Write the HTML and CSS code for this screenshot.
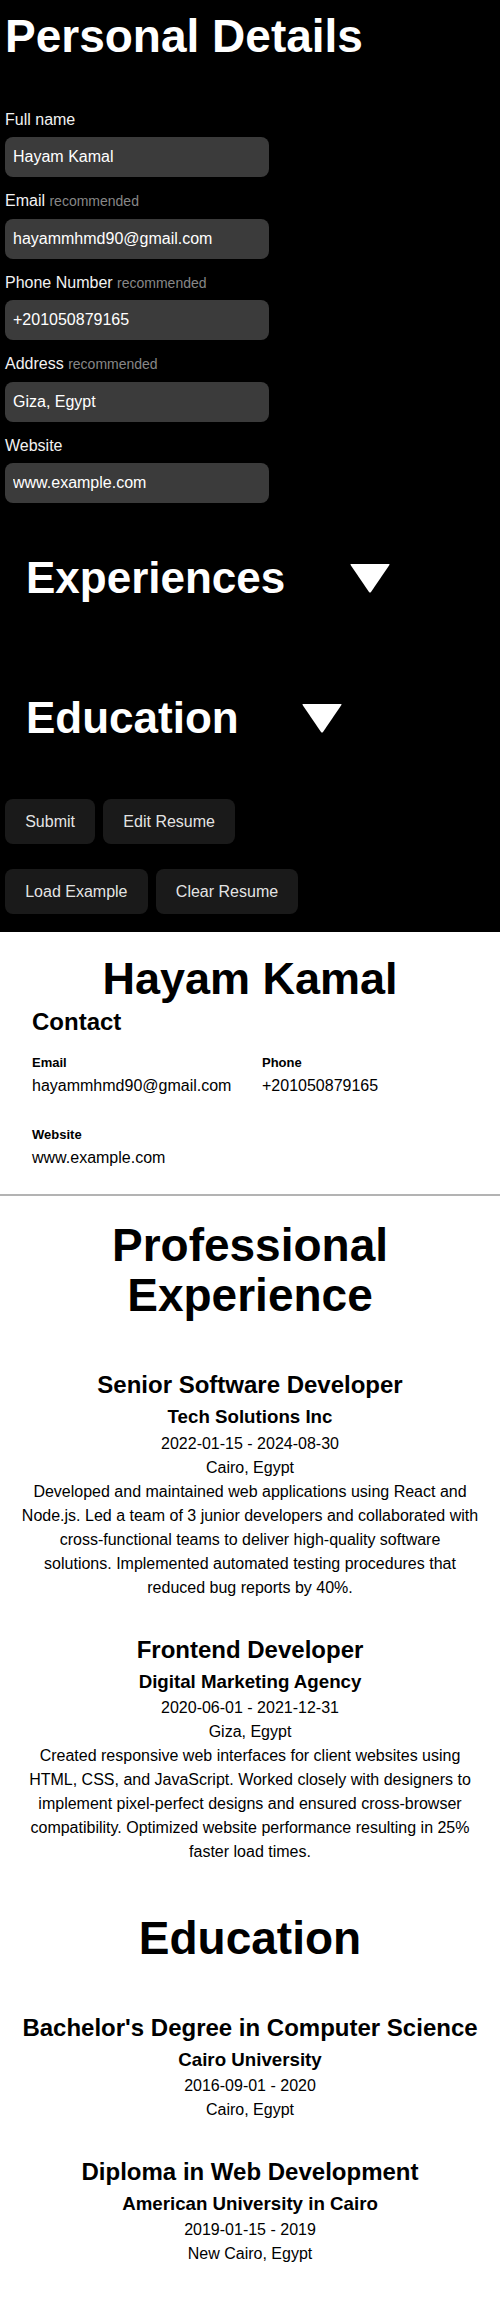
FILE: index.html
```html
<!DOCTYPE html>
<html lang="en">
<head>
<meta charset="utf-8">
<title>Resume Builder</title>
<link rel="stylesheet" href="styles.css">
</head>
<body>
<div class="app">
  <form class="editor">
    <h1 class="editor-title">Personal Details</h1>
    <div class="fields">
      <div class="field">
        <label class="field-label" for="fullname">Full name</label>
        <input class="field-input" id="fullname" type="text" value="Hayam Kamal">
      </div>
      <div class="field">
        <label class="field-label" for="email">Email <span class="rec">recommended</span></label>
        <input class="field-input" id="email" type="text" value="hayammhmd90@gmail.com">
      </div>
      <div class="field">
        <label class="field-label" for="phone">Phone Number <span class="rec">recommended</span></label>
        <input class="field-input" id="phone" type="text" value="+201050879165">
      </div>
      <div class="field">
        <label class="field-label" for="address">Address <span class="rec">recommended</span></label>
        <input class="field-input" id="address" type="text" value="Giza, Egypt">
      </div>
      <div class="field">
        <label class="field-label" for="website">Website</label>
        <input class="field-input" id="website" type="text" value="www.example.com">
      </div>
    </div>

    <div class="toggle toggle-exp">
      <h1 class="toggle-title">Experiences</h1>
      <svg class="caret" width="40" height="29" viewBox="0 0 40 29"><path d="M1 0 H39 Q40 0 39.4 1 L21 28 Q20 29.2 19 28 L0.6 1 Q0 0 1 0 Z" fill="#fff"/></svg>
    </div>
    <div class="toggle toggle-edu">
      <h1 class="toggle-title">Education</h1>
      <svg class="caret" width="40" height="29" viewBox="0 0 40 29"><path d="M1 0 H39 Q40 0 39.4 1 L21 28 Q20 29.2 19 28 L0.6 1 Q0 0 1 0 Z" fill="#fff"/></svg>
    </div>

    <div class="actions">
      <div class="btn-row">
        <button type="button" class="btn">Submit</button>
        <button type="button" class="btn">Edit Resume</button>
      </div>
      <div class="btn-row">
        <button type="button" class="btn">Load Example</button>
        <button type="button" class="btn">Clear Resume</button>
      </div>
    </div>
  </form>

  <main class="resume">
    <header class="resume-head">
      <h1 class="resume-name">Hayam Kamal</h1>
      <div class="contact">
        <h2 class="contact-title">Contact</h2>
        <div class="contact-grid">
          <div class="contact-item">
            <div class="contact-label">Email</div>
            <div class="contact-value">hayammhmd90@gmail.com</div>
          </div>
          <div class="contact-item">
            <div class="contact-label">Phone</div>
            <div class="contact-value">+201050879165</div>
          </div>
          <div class="contact-item">
            <div class="contact-label">Website</div>
            <div class="contact-value">www.example.com</div>
          </div>
        </div>
      </div>
    </header>
    <div class="divider"></div>

    <section class="section section-exp">
      <h1 class="section-title">Professional Experience</h1>
      <div class="entry">
        <h2 class="entry-title">Senior Software Developer</h2>
        <h3 class="entry-org">Tech Solutions Inc</h3>
        <p class="entry-line">2022-01-15 - 2024-08-30</p>
        <p class="entry-line">Cairo, Egypt</p>
        <p class="entry-desc">Developed and maintained web applications using React and<br>Node.js. Led a team of 3 junior developers and collaborated with<br>cross-functional teams to deliver high-quality software<br>solutions. Implemented automated testing procedures that<br>reduced bug reports by 40%.</p>
      </div>
      <div class="entry">
        <h2 class="entry-title">Frontend Developer</h2>
        <h3 class="entry-org">Digital Marketing Agency</h3>
        <p class="entry-line">2020-06-01 - 2021-12-31</p>
        <p class="entry-line">Giza, Egypt</p>
        <p class="entry-desc">Created responsive web interfaces for client websites using<br>HTML, CSS, and JavaScript. Worked closely with designers to<br>implement pixel-perfect designs and ensured cross-browser<br>compatibility. Optimized website performance resulting in 25%<br>faster load times.</p>
      </div>
    </section>

    <section class="section section-edu">
      <h1 class="section-title">Education</h1>
      <div class="entry">
        <h2 class="entry-title">Bachelor's Degree in Computer Science</h2>
        <h3 class="entry-org">Cairo University</h3>
        <p class="entry-line">2016-09-01 - 2020</p>
        <p class="entry-line">Cairo, Egypt</p>
      </div>
      <div class="entry">
        <h2 class="entry-title">Diploma in Web Development</h2>
        <h3 class="entry-org">American University in Cairo</h3>
        <p class="entry-line">2019-01-15 - 2019</p>
        <p class="entry-line">New Cairo, Egypt</p>
      </div>
    </section>
  </main>
</div>
</body>
</html>
```
FILE: styles.css
```css
* {
  box-sizing: border-box;
}

html, body {
  margin: 0;
  padding: 0;
  background: #ffffff;
}

body {
  font-family: "Liberation Sans", Arial, sans-serif;
  font-size: 16px;
  line-height: 1.5;
}

/* ---------- editor (dark) ---------- */
.editor {
  background: #000000;
  color: rgba(255, 255, 255, 0.9);
  padding: 11px 5px 17.8px;
}

.editor-title {
  margin: 0;
  font-size: 46px;
  line-height: 50px;
  font-weight: 700;
  color: #ffffff;
}

.fields {
  margin-top: 46.5px;
  display: flex;
  flex-direction: column;
  gap: 12px;
}

.field {
  display: flex;
  flex-direction: column;
}

.field-label {
  display: block;
  line-height: 24px;
  margin-bottom: 5.5px;
  color: #f2f2f2;
}

.rec {
  font-size: 14px;
  color: #878787;
}

.field-input {
  width: 264px;
  height: 40px;
  padding: 8px;
  border: none;
  border-radius: 8px;
  background: #3b3b3b;
  color: #ffffff;
  font-family: inherit;
  font-size: 16px;
  line-height: 24px;
  outline: none;
}

.toggle {
  display: flex;
  align-items: flex-start;
  padding-left: 21px;
}

.toggle-exp {
  margin-top: 50.75px;
}

.toggle-edu {
  margin-top: 92px;
}

.toggle-title {
  margin: 0;
  font-size: 44px;
  line-height: 48px;
  font-weight: 700;
  color: #ffffff;
}

.toggle-exp .caret {
  margin-left: 65px;
  margin-top: 10px;
}

.toggle-edu .caret {
  margin-left: 63px;
  margin-top: 10px;
}

.actions {
  margin-top: 57.25px;
  display: flex;
  flex-direction: column;
  gap: 24.8px;
}

.btn-row {
  display: flex;
  gap: 8px;
}

.btn {
  font-family: inherit;
  font-size: 16px;
  line-height: 24px;
  padding: 9.6px 19.2px;
  border: 1px solid transparent;
  border-radius: 8px;
  background: #1a1a1a;
  color: rgba(255, 255, 255, 0.9);
  cursor: pointer;
}

/* ---------- resume (light) ---------- */
.resume {
  background: #ffffff;
  color: #000000;
  padding-top: 22px;
  padding-bottom: 40px;
}

.resume-head {
  padding: 0 16px;
}

.resume-name {
  margin: 0;
  text-align: center;
  font-size: 45px;
  line-height: 50px;
  font-weight: 700;
}

.contact {
  padding: 0 16px;
}

.contact-title {
  margin: 0;
  font-size: 24px;
  line-height: 36px;
  font-weight: 700;
}

.contact-grid {
  margin-top: 13px;
  display: grid;
  grid-template-columns: 230px 1fr;
  row-gap: 27px;
}

.contact-label {
  font-size: 13px;
  line-height: 19px;
  font-weight: 700;
  margin-bottom: 2px;
}

.contact-value {
  line-height: 24px;
}

.divider {
  margin-top: 24px;
  height: 2px;
  background: #b3b3b3;
}

.section {
  padding: 0 16px;
  text-align: center;
}

.section-exp {
  padding-top: 24px;
}

.section-edu {
  padding-top: 49px;
}

.section-title {
  margin: 0 0 47.5px;
  font-size: 46px;
  line-height: 50px;
  font-weight: 700;
}

.entry + .entry {
  margin-top: 32px;
}

.entry-title {
  margin: 0;
  font-size: 24px;
  line-height: 36px;
  font-weight: 700;
}

.entry-org {
  margin: 0;
  font-size: 18.72px;
  line-height: 28.08px;
  font-weight: 700;
}

.entry-line,
.entry-desc {
  margin: 0;
  line-height: 24px;
}
```
